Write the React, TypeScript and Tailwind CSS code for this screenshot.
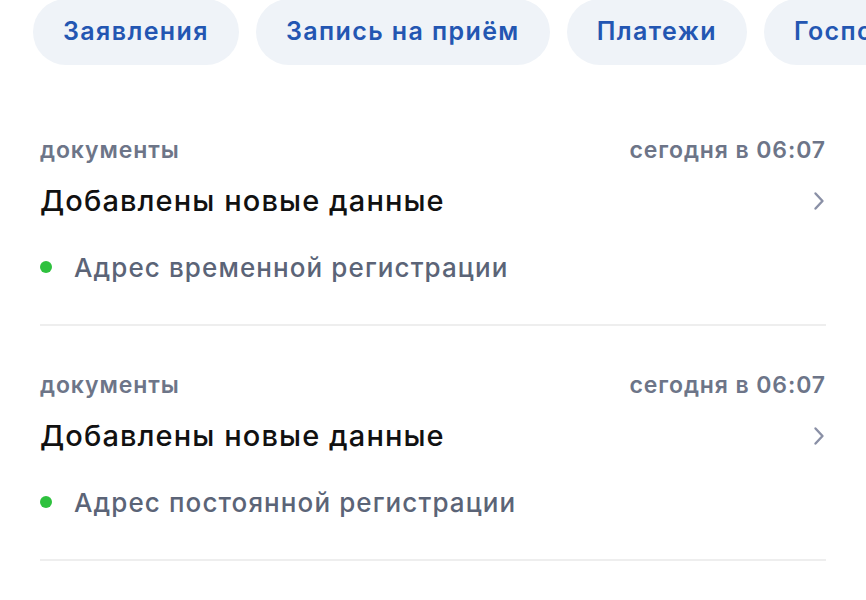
import React from 'react';

const tabs = ['Заявления', 'Запись на приём', 'Платежи', 'Госпочта'];

const items = [
  { tag: 'документы', time: 'сегодня в 06:07', title: 'Добавлены новые данные', detail: 'Адрес временной регистрации' },
  { tag: 'документы', time: 'сегодня в 06:07', title: 'Добавлены новые данные', detail: 'Адрес постоянной регистрации' },
];

function Chevron() {
  return (
    <svg width="12" height="20" viewBox="0 0 12 20" fill="none" className="shrink-0 mr-[1px]">
      <path d="M2.5 2.5L9.5 10L2.5 17.5" stroke="#8a90a6" strokeWidth="2.4" strokeLinecap="round" strokeLinejoin="round" />
    </svg>
  );
}

export default function App() {
  return (
    <div className="w-[866px] h-[600px] overflow-hidden bg-white font-['Inter','Noto_Sans',sans-serif]">
      {/* Tabs */}
      <div className="flex gap-[17px] pl-[33px] -mt-[1px] whitespace-nowrap">
        {tabs.map((t) => (
          <div
            key={t}
            className="shrink-0 h-[66px] flex items-center px-[30px] rounded-full bg-[#eff3f8] text-[25px] font-semibold text-[#2356b2] tracking-[1.4px]"
          >
            {t}
          </div>
        ))}
      </div>

      {/* Feed */}
      <div className="px-[40px] pt-[70px]">
        {items.map((it, i) => (
          <div key={i} className="border-b-2 border-[#eeeeee] pb-[37px] mb-[44px]">
            <div className="flex justify-between items-center h-[30px] text-[23px] font-semibold text-[#6d7588] tracking-[0.9px]">
              <span>{it.tag}</span>
              <span>{it.time}</span>
            </div>
            <div className="flex justify-between items-center h-[40px] mt-[16px]">
              <span className="text-[29px] font-medium text-[#111111] tracking-[1.1px]">{it.title}</span>
              <Chevron />
            </div>
            <div className="flex items-center gap-[22px] h-[40px] mt-[26px]">
              <span className="w-[12px] h-[12px] rounded-full bg-[#2ec13e]" />
              <span className="text-[26px] font-medium text-[#5b6477] tracking-[1.1px]">{it.detail}</span>
            </div>
          </div>
        ))}
      </div>
    </div>
  );
}
